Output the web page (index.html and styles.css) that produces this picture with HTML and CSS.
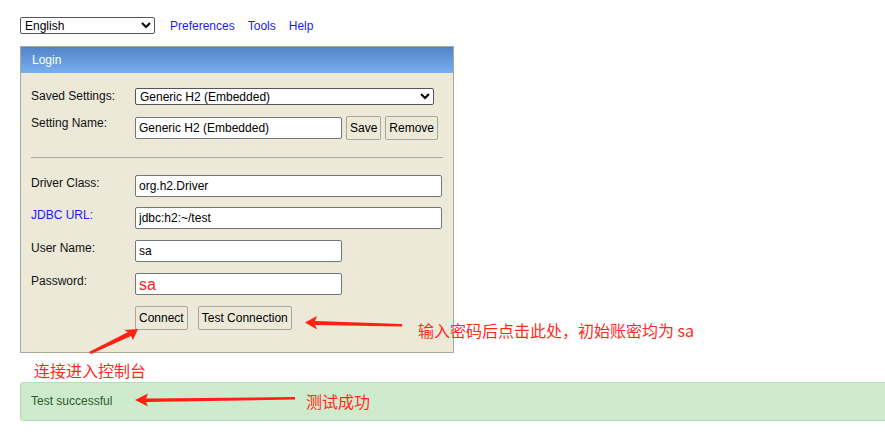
FILE: index.html
```html
<!DOCTYPE html>
<html>
<head>
    <title>H2 Console</title>
    <link rel="stylesheet" href="styles.css">
</head>
<body>
    <div class="page">
        <div class="toolbar">
            <select class="lang">
                <option>English</option>
            </select>
            <a href="#">Preferences</a>
            <a href="#">Tools</a>
            <a href="#">Help</a>
        </div>

        <div class="login">
            <div class="login-head">Login</div>
            <div class="login-body">
                <div class="row row-first">
                    <label>Saved Settings:</label>
                    <select class="saved">
                        <option>Generic H2 (Embedded)</option>
                    </select>
                </div>
                <div class="row row-buttons">
                    <label>Setting Name:</label>
                    <input class="short" type="text" value="Generic H2 (Embedded)">
                    <button class="small">Save</button>
                    <button class="small">Remove</button>
                </div>
                <hr>
                <div class="row row-top">
                    <label>Driver Class:</label>
                    <input class="wide" type="text" value="org.h2.Driver">
                </div>
                <div class="row row-tight">
                    <label class="link-label">JDBC URL:</label>
                    <input class="wide" type="text" value="jdbc:h2:~/test">
                </div>
                <div class="row">
                    <label>User Name:</label>
                    <input class="short" type="text" value="sa">
                </div>
                <div class="row">
                    <label>Password:</label>
                    <input class="short pwd" type="text" value="sa">
                </div>
                <div class="row actions">
                    <label></label>
                    <button>Connect</button>
                    <button>Test Connection</button>
                </div>
            </div>
        </div>

        <div class="note-under">连接进入控制台</div>

        <div class="result">Test successful</div>
    </div>

    <!-- annotations drawn over the screenshot -->
    <div class="note note-connect">输入密码后点击此处，初始账密均为 sa</div>
    <div class="note note-ok">测试成功</div>
    <svg class="arrows" width="885" height="445" viewBox="0 0 885 445">
        <polygon points="305,322.5 317,316 315,321 402,324 402,326.5 315,325 317,329.5" />
        <polygon points="138,329 133,340 131,336 91,354 89,352 128,332 124,330" />
        <polygon points="135,400 148,393.5 146,398.5 295,397 295,399.5 146,402 148,406.5" />
    </svg>
</body>
</html>
```

FILE: styles.css
```css
html, body {
    margin: 0;
    padding: 0;
    overflow: hidden;
}
body {
    font-family: "Liberation Sans", Arial, sans-serif;
    font-size: 12px;
    color: #111;
    background: #fff;
}
.page {
    padding: 17px 0 0 20px;
}
.toolbar {
    display: flex;
    align-items: center;
    height: 17px;
}
.toolbar a {
    color: #1c1cf0;
    text-decoration: none;
    margin-left: 13px;
    font-size: 12px;
}
.toolbar a:first-of-type {
    margin-left: 15px;
}
select {
    font-family: "Liberation Sans", Arial, sans-serif;
    font-size: 12px;
    height: 17px;
    padding: 0;
    border: 1px solid #555;
    border-radius: 2px;
    background: #fff;
    color: #000;
}
.lang {
    width: 135px;
}
.login {
    width: 432px;
    margin-top: 12px;
    border: 1px solid #aaa79b;
    background: #ece9d8;
}
.login-head {
    height: 26px;
    line-height: 26px;
    padding-left: 11px;
    color: #fff;
    font-size: 12px;
    background: linear-gradient(#5282c8, #78b0f0);
}
.login-body {
    padding: 15px 10px 22px 10px;
}
.row {
    display: flex;
    align-items: flex-start;
    margin-top: 11px;
}
.row-first {
    margin-top: 0;
    align-items: center;
}
.row-buttons {
    margin-top: 11px;
    align-items: center;
}
.row-top {
    margin-top: 0;
}
.row-tight {
    margin-top: 10px;
}
.row label {
    width: 104px;
    flex: none;
    line-height: 15px;
    padding-top: 1px;
}
.row-first label {
    padding-top: 0;
}
.row-buttons label {
    align-self: flex-start;
    padding-top: 0;
}
.link-label {
    color: #1c1cf0;
}
.saved {
    width: 299px;
}
input {
    box-sizing: border-box;
    height: 22px;
    padding: 1px 3px;
    border: 1px solid #767676;
    border-radius: 2px;
    font-family: "Liberation Sans", Arial, sans-serif;
    font-size: 12px;
    color: #000;
    background: #fff;
}
.wide {
    width: 307px;
}
.short {
    width: 207px;
}
.pwd {
    color: #f22;
    font-size: 16px;
    padding-top: 3px;
}
button {
    box-sizing: border-box;
    height: 24px;
    padding: 0 3px;
    border: 1px solid #aaa798;
    border-radius: 2px;
    background: #ece9d8;
    font-family: "Liberation Sans", Arial, sans-serif;
    font-size: 12px;
    color: #000;
}
.small {
    margin-left: 4px;
}
.actions {
    margin-top: 11px;
}
.actions button + button {
    margin-left: 10px;
}
hr {
    margin: 17px 0 17px 0;
    border: none;
    border-top: 1px solid #aaa79b;
    height: 0;
}
.note-under {
    margin: 8px 0 3px 14px;
    color: #ff2a1a;
    font-family: "Noto Sans CJK SC", sans-serif;
    font-size: 16px;
    line-height: 18px;
}
.result {
    margin: 0 -20px 0 0;
    height: 37px;
    line-height: 37px;
    padding-left: 10px;
    border: 1px solid #b6dbbe;
    border-radius: 3px;
    background: #ceebce;
    color: #2f5a2f;
    font-size: 12px;
}
.note {
    position: absolute;
    color: #ff2a1a;
    font-family: "Noto Sans CJK SC", sans-serif;
    font-size: 16px;
    line-height: 18px;
    white-space: nowrap;
}
.note-connect {
    left: 418px;
    top: 321px;
}
.note-ok {
    left: 306px;
    top: 392px;
}
.arrows {
    position: absolute;
    left: 0;
    top: 0;
    pointer-events: none;
}
.arrows polygon {
    fill: #ff2010;
}
```
